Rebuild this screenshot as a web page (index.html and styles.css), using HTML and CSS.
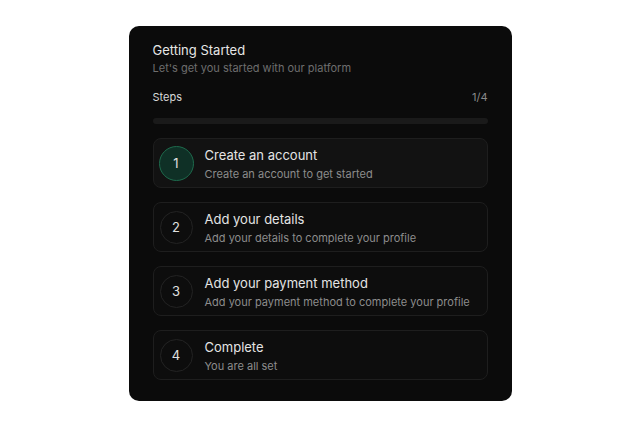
FILE: index.html
```html
<!DOCTYPE html>
<html lang="en">
<head>
  <meta charset="UTF-8" />
  <meta name="viewport" content="width=device-width, initial-scale=1.0" />
  <title>Getting Started</title>
  <link rel="stylesheet" href="styles.css">
</head>
<body>
<div class="card">
  <h1 class="card__title">Getting Started</h1>
  <p class="card__sub">Let's get you started with our platform</p>
  <div class="progress__head">
    <span>Steps</span>
    <span class="progress__count">1/4</span>
  </div>
  <div class="progress"><div class="progress__fill" style="width: 0%"></div></div>
  <ul class="steps">
    <li class="step step--active">
      <div class="step__num">1</div>
      <div class="step__body">
        <div class="step__title">Create an account</div>
        <div class="step__desc">Create an account to get started</div>
      </div>
    </li>
    <li class="step">
      <div class="step__num">2</div>
      <div class="step__body">
        <div class="step__title">Add your details</div>
        <div class="step__desc">Add your details to complete your profile</div>
      </div>
    </li>
    <li class="step">
      <div class="step__num">3</div>
      <div class="step__body">
        <div class="step__title">Add your payment method</div>
        <div class="step__desc">Add your payment method to complete your profile</div>
      </div>
    </li>
    <li class="step">
      <div class="step__num">4</div>
      <div class="step__body">
        <div class="step__title">Complete</div>
        <div class="step__desc">You are all set</div>
      </div>
    </li>
  </ul>
</div>
</body>
</html>
```

FILE: styles.css
```css
* {
  box-sizing: border-box;
}
html {
  font-family: Inter, "Open Sans", sans-serif;
  color: #e4e4e4;
}
body {
  margin: 0;
  background: #fff;
  padding-top: 26px;
}
.card {
  width: 383px;
  margin: 0 auto;
  background: #0b0b0b;
  border-radius: 10px;
  padding: 15px 24px 21px;
}
.card__title {
  margin: 0;
  font-size: 13px;
  font-weight: 400;
  line-height: 18px;
  color: #e6e6e6;
}
.card__sub {
  margin: 1px 0 0;
  font-size: 11px;
  line-height: 16px;
  color: #6e6e6e;
}
.progress__head {
  display: flex;
  justify-content: space-between;
  margin-top: 13px;
  font-size: 11px;
  line-height: 16px;
  color: #d8d8d8;
}
.progress__count {
  color: #8a8a8a;
}
.progress {
  margin-top: 13px;
  height: 6px;
  border-radius: 3px;
  background: #1a1a1a;
  overflow: hidden;
}
.progress__fill {
  height: 100%;
  background: #1e6b4a;
}
.steps {
  list-style: none;
  margin: 14px 0 0;
  padding: 0;
  display: flex;
  flex-direction: column;
  gap: 14px;
}
.step {
  display: flex;
  align-items: center;
  gap: 12px;
  height: 50px;
  padding: 0 6px;
  border: 1px solid #1e1e1e;
  border-radius: 8px;
  background: #0d0d0d;
}
.step--active {
  background: #121212;
}
.step__num {
  flex: none;
  width: 33px;
  height: 33px;
  border-radius: 50%;
  border: 1px solid #232323;
  display: flex;
  align-items: center;
  justify-content: center;
  font-size: 13px;
  color: #e0e0e0;
}
.step--active .step__num {
  width: 35px;
  height: 35px;
  margin-left: -1px;
  margin-right: -1px;
  background: #0f3026;
  border-color: #1e6a4c;
}
.step__body {
  padding-top: 2px;
}
.step__title {
  font-size: 13px;
  line-height: 18px;
  margin-bottom: 2px;
  color: #e4e4e4;
}
.step__desc {
  font-size: 11px;
  line-height: 16px;
  color: #8c8c8c;
}
```
